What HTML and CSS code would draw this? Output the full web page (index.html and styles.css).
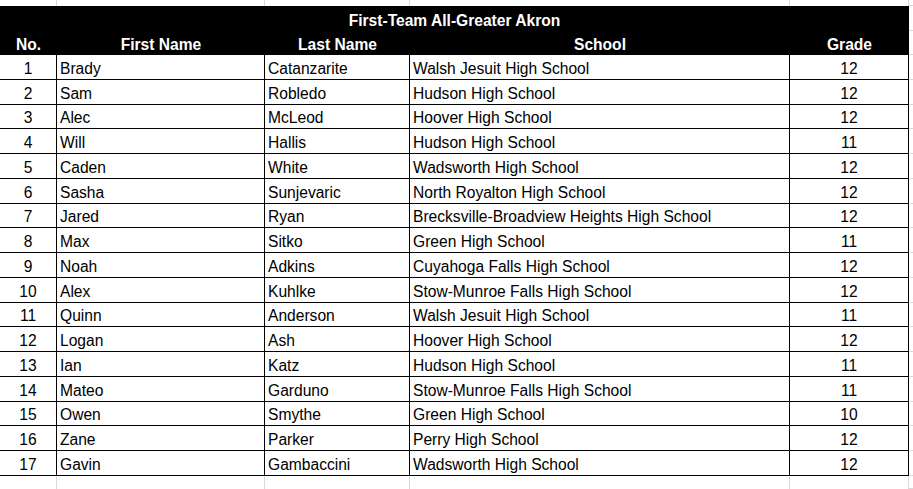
FILE: index.html
```html
<!DOCTYPE html>
<html>
<head>
<meta charset="utf-8">
<link rel="stylesheet" href="styles.css">
</head>
<body>
<div class="sheet">
  <div class="row strip top"><div></div><div></div><div></div><div></div><div></div><div class="extra"></div></div>
  <div class="row title"><div class="title-cell">First-Team All-Greater Akron</div><div class="extra"></div></div>
  <div class="row head"><div class="c">No.</div><div class="c">First Name</div><div class="c">Last Name</div><div class="c">School</div><div class="c">Grade</div><div class="extra"></div></div>
  <div class="row data"><div class="c">1</div><div>Brady</div><div>Catanzarite</div><div>Walsh Jesuit High School</div><div class="c">12</div><div class="extra"></div></div>
  <div class="row data"><div class="c">2</div><div>Sam</div><div>Robledo</div><div>Hudson High School</div><div class="c">12</div><div class="extra"></div></div>
  <div class="row data"><div class="c">3</div><div>Alec</div><div>McLeod</div><div>Hoover High School</div><div class="c">12</div><div class="extra"></div></div>
  <div class="row data"><div class="c">4</div><div>Will</div><div>Hallis</div><div>Hudson High School</div><div class="c">11</div><div class="extra"></div></div>
  <div class="row data"><div class="c">5</div><div>Caden</div><div>White</div><div>Wadsworth High School</div><div class="c">12</div><div class="extra"></div></div>
  <div class="row data"><div class="c">6</div><div>Sasha</div><div>Sunjevaric</div><div>North Royalton High School</div><div class="c">12</div><div class="extra"></div></div>
  <div class="row data"><div class="c">7</div><div>Jared</div><div>Ryan</div><div>Brecksville-Broadview Heights High School</div><div class="c">12</div><div class="extra"></div></div>
  <div class="row data"><div class="c">8</div><div>Max</div><div>Sitko</div><div>Green High School</div><div class="c">11</div><div class="extra"></div></div>
  <div class="row data"><div class="c">9</div><div>Noah</div><div>Adkins</div><div>Cuyahoga Falls High School</div><div class="c">12</div><div class="extra"></div></div>
  <div class="row data"><div class="c">10</div><div>Alex</div><div>Kuhlke</div><div>Stow-Munroe Falls High School</div><div class="c">12</div><div class="extra"></div></div>
  <div class="row data"><div class="c">11</div><div>Quinn</div><div>Anderson</div><div>Walsh Jesuit High School</div><div class="c">11</div><div class="extra"></div></div>
  <div class="row data"><div class="c">12</div><div>Logan</div><div>Ash</div><div>Hoover High School</div><div class="c">12</div><div class="extra"></div></div>
  <div class="row data"><div class="c">13</div><div>Ian</div><div>Katz</div><div>Hudson High School</div><div class="c">11</div><div class="extra"></div></div>
  <div class="row data"><div class="c">14</div><div>Mateo</div><div>Garduno</div><div>Stow-Munroe Falls High School</div><div class="c">11</div><div class="extra"></div></div>
  <div class="row data"><div class="c">15</div><div>Owen</div><div>Smythe</div><div>Green High School</div><div class="c">10</div><div class="extra"></div></div>
  <div class="row data"><div class="c">16</div><div>Zane</div><div>Parker</div><div>Perry High School</div><div class="c">12</div><div class="extra"></div></div>
  <div class="row data"><div class="c">17</div><div>Gavin</div><div>Gambaccini</div><div>Wadsworth High School</div><div class="c">12</div><div class="extra"></div></div>
  <div class="row strip bottom"><div></div><div></div><div></div><div></div><div></div><div class="extra"></div></div>
</div>
</body>
</html>
```

FILE: styles.css
```css
html, body {
  margin: 0;
  padding: 0;
  background: #ffffff;
}
body {
  width: 913px;
  height: 489px;
  overflow: hidden;
  font-family: "Liberation Sans", Arial, sans-serif;
  font-size: 15.6px;
  color: #000000;
}
.sheet {
  display: flex;
  flex-direction: column;
  width: 913px;
}
.row {
  display: grid;
  grid-template-columns: 57px 208px 145px 380px 119px 1fr;
}
.row > div {
  box-sizing: border-box;
  display: flex;
  align-items: flex-end;
  padding: 0 3px 1px 3px;
  line-height: 18px;
  white-space: nowrap;
  overflow: hidden;
}
.row > div.c {
  justify-content: center;
}
.strip > div {
  border-right: 1px solid #d9d9d9;
}
.strip > div.extra {
  border-right: none;
}
.top {
  height: 6px;
}
.bottom {
  height: 13px;
}
.title, .head {
  color: #ffffff;
  font-weight: bold;
}
.title {
  height: 25px;
}
.title-cell {
  grid-column: 1 / 6;
  background: #000000;
  justify-content: center;
}
.head {
  height: 24px;
}
.head > div {
  background: #000000;
}
.row > div.extra {
  background: #ffffff;
  border-bottom: 1px solid #d9d9d9;
  padding: 0;
}
.data {
  height: 24.76px;
}
.data > div {
  border-right: 1px solid #000000;
  border-bottom: 1px solid #000000;
}
.data > div.extra {
  border-right: none;
  border-bottom: 1px solid #d9d9d9;
}
```
